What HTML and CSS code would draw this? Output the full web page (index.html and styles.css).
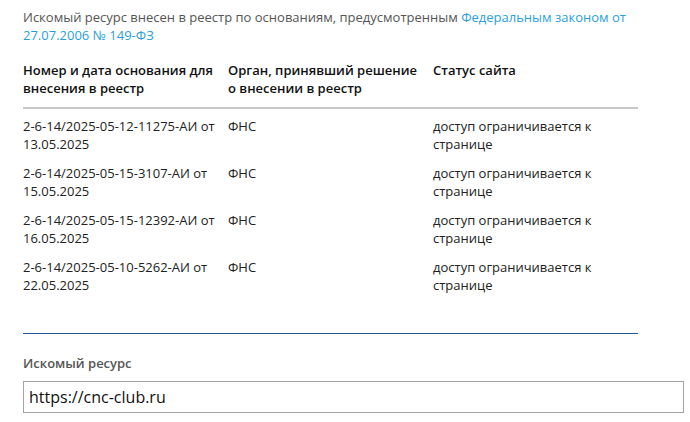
FILE: index.html
```html
<!DOCTYPE html>
<html>
<head>
<meta charset="utf-8">
<link rel="stylesheet" href="styles.css">
</head>
<body>
<div class="page">
  <p class="intro">Искомый ресурс внесен в реестр по основаниям, предусмотренным <a href="#" class="link">Федеральным законом от 27.07.2006 № 149-ФЗ</a></p>
  <table class="reg">
    <thead>
      <tr>
        <th>Номер и дата основания для внесения в реестр</th>
        <th>Орган, принявший решение о внесении в реестр</th>
        <th>Статус сайта</th>
      </tr>
    </thead>
    <tbody>
      <tr><td>2-6-14/2025-05-12-11275-АИ от 13.05.2025</td><td>ФНС</td><td>доступ ограничивается к странице</td></tr>
      <tr><td>2-6-14/2025-05-15-3107-АИ от 15.05.2025</td><td>ФНС</td><td>доступ ограничивается к странице</td></tr>
      <tr><td>2-6-14/2025-05-15-12392-АИ от 16.05.2025</td><td>ФНС</td><td>доступ ограничивается к странице</td></tr>
      <tr><td>2-6-14/2025-05-10-5262-АИ от 22.05.2025</td><td>ФНС</td><td>доступ ограничивается к странице</td></tr>
    </tbody>
  </table>
  <div class="sep"></div>
  <div class="field">
    <div class="label">Искомый ресурс</div>
    <div class="input">https://cnc-club.ru</div>
  </div>
</div>
</body>
</html>
```
FILE: styles.css
```css
html, body { margin: 0; padding: 0; background: #fff; }
body { font-family: "Open Sans", "Noto Sans", sans-serif; font-size: 13px; line-height: 18px; color: #222; }
.page { padding: 8px 6px 0 23px; }
.intro { margin: 0; color: #555; width: 640px; }
.link { color: #2b9fd9; text-decoration: none; }
.reg { border-collapse: collapse; width: 615px; margin-top: 17px; table-layout: fixed; }
.reg th { text-align: left; font-weight: 600; vertical-align: top; padding: 0 5px 10px 0; border-bottom: 2px solid #c8c8c8; color: #111; }
.reg td { vertical-align: top; padding: 8px 5px 3px 0; color: #222; }
.sep { width: 615px; border-top: 1px solid #24579a; margin-top: 36px; }
.field { margin-top: 20px; }
.label { font-weight: 600; color: #555; font-size: 13px; }
.input { margin-top: 9px; border: 1px solid #a3a3a3; height: 30px; line-height: 30px; padding: 0 5px; font-size: 16px; color: #111; }
```
